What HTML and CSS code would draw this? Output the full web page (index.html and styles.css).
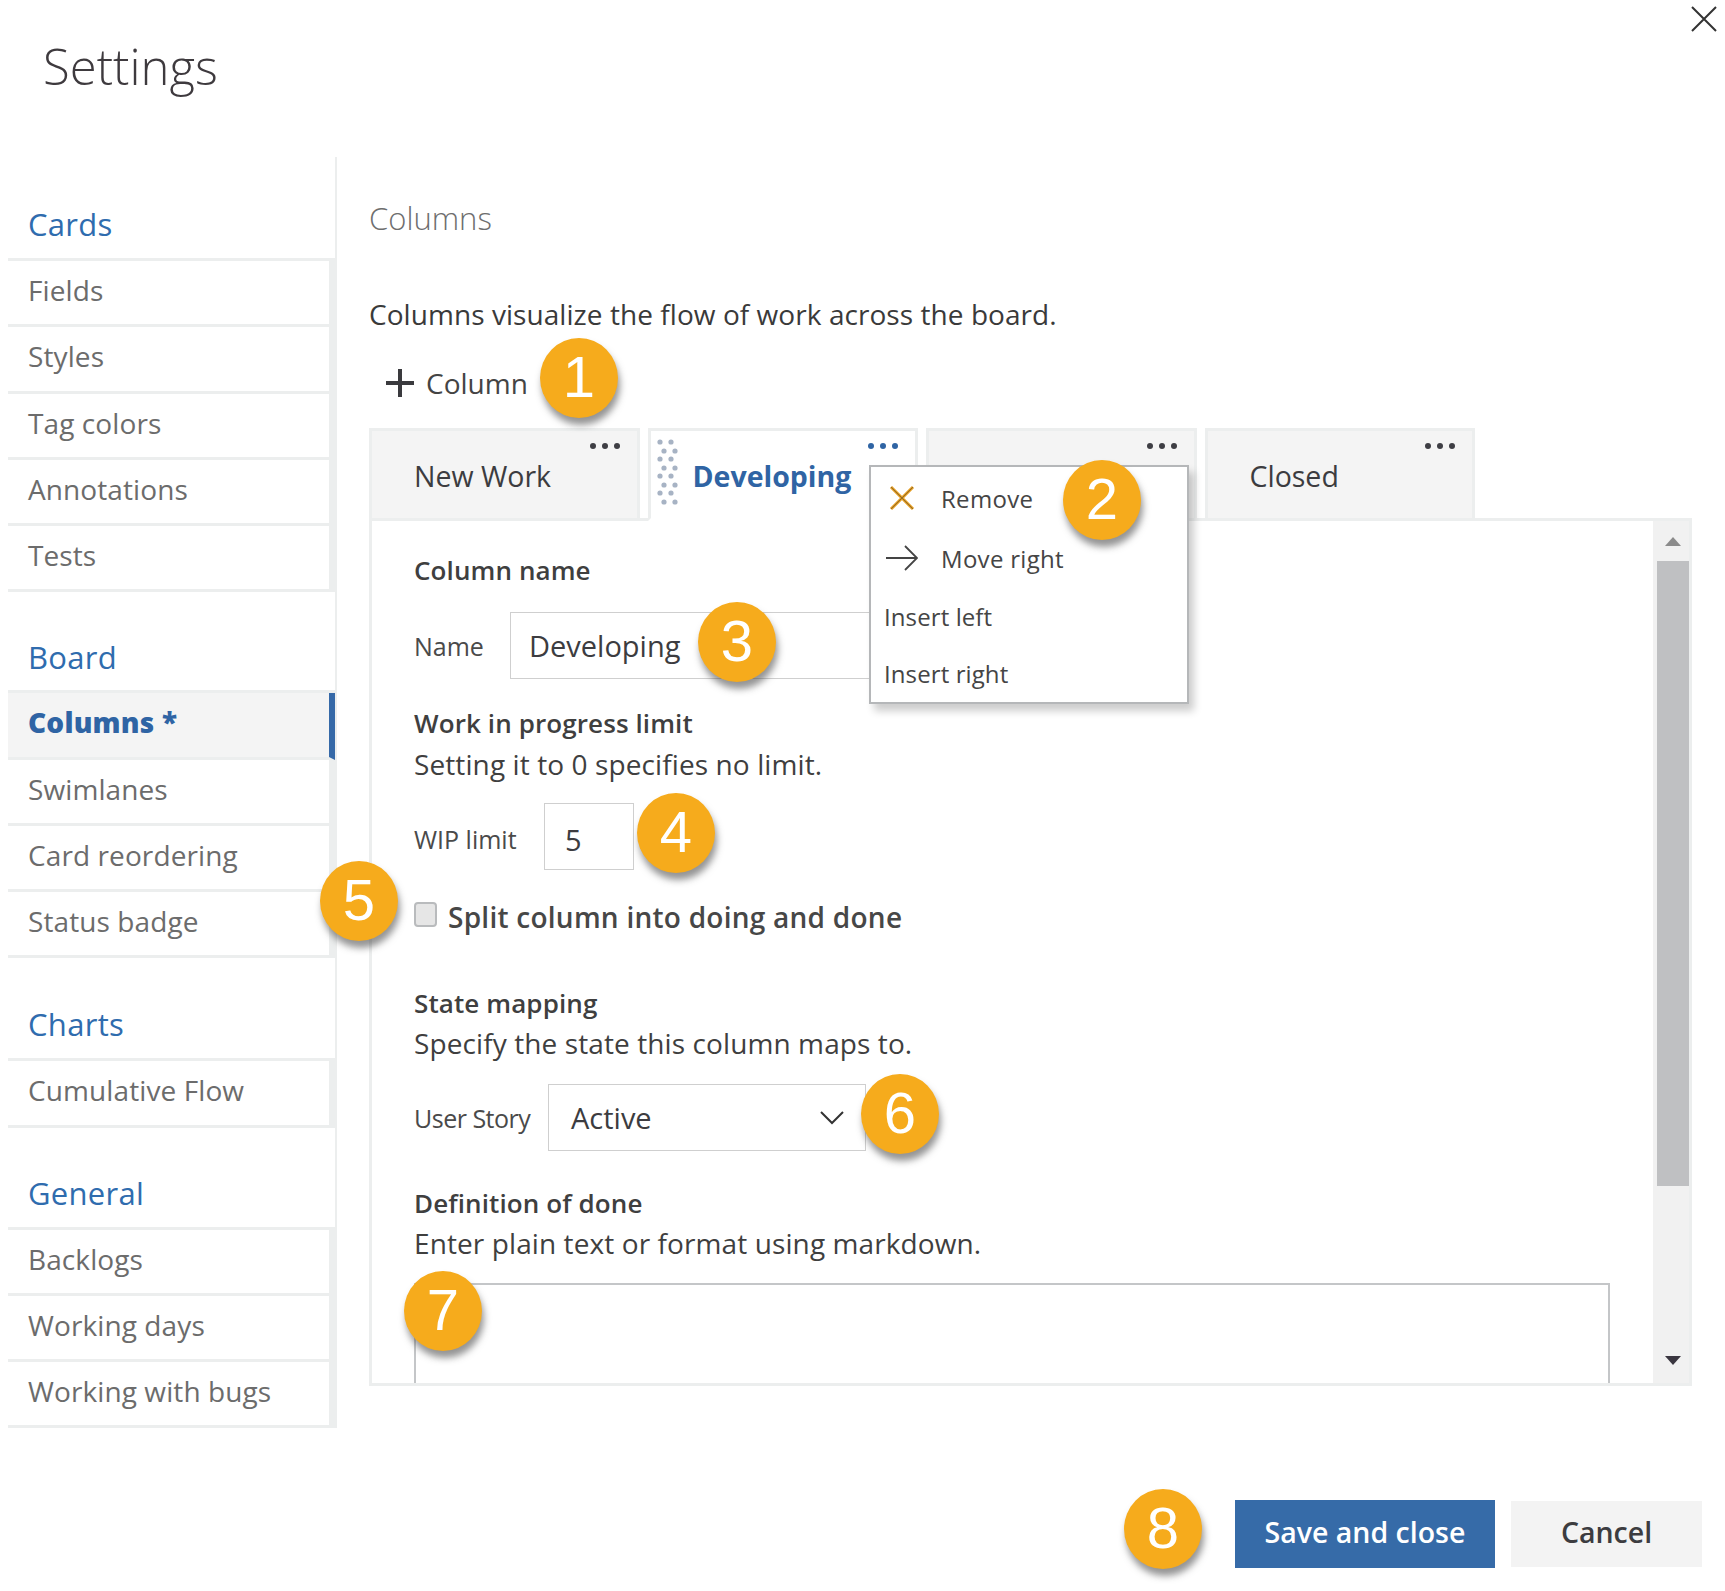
FILE: index.html
```html
<!DOCTYPE html>
<html lang="en">
<head>
    <meta charset="UTF-8">
    <title>Settings</title>
    <link rel="stylesheet" href="styles.css">
</head>
<body>
    <div class="dialog">
        <button class="close-btn" aria-label="Close">
            <svg width="26" height="26" viewBox="0 0 26 26"><path d="M1 1 L25 25 M25 1 L1 25" stroke="#333" stroke-width="2" fill="none"/></svg>
        </button>

        <header class="dialog-title">Settings</header>

        <div class="dialog-body">
            <nav class="sidebar">
                <div class="nav-group">
                    <div class="nav-title">Cards</div>
                    <ul class="nav-list">
                        <li>Fields</li>
                        <li>Styles</li>
                        <li>Tag colors</li>
                        <li>Annotations</li>
                        <li>Tests</li>
                    </ul>
                </div>
                <div class="nav-group">
                    <div class="nav-title">Board</div>
                    <ul class="nav-list">
                        <li class="active">Columns *</li>
                        <li>Swimlanes</li>
                        <li>Card reordering</li>
                        <li>Status badge</li>
                    </ul>
                </div>
                <div class="nav-group">
                    <div class="nav-title">Charts</div>
                    <ul class="nav-list">
                        <li>Cumulative Flow</li>
                    </ul>
                </div>
                <div class="nav-group">
                    <div class="nav-title">General</div>
                    <ul class="nav-list">
                        <li>Backlogs</li>
                        <li>Working days</li>
                        <li>Working with bugs</li>
                    </ul>
                </div>
            </nav>

            <main class="content">
                <h2 class="page-title">Columns</h2>
                <p class="intro">Columns visualize the flow of work across the board.</p>
                <div class="add-column">
                    <svg width="30" height="30" viewBox="0 0 30 30"><path d="M15 1 V29 M1 15 H29" stroke="#3a3a3e" stroke-width="4" fill="none"/></svg>
                    <span>Column</span>
                </div>

                <div class="tabs">
                    <div class="tab">
                        <span class="tab-name">New Work</span>
                        <svg class="tab-more" width="30" height="6" viewBox="0 0 30 6"><circle cx="3" cy="3" r="3"/><circle cx="15" cy="3" r="3"/><circle cx="27" cy="3" r="3"/></svg>
                    </div>
                    <div class="tab tab-active">
                        <svg class="grip" width="21" height="68" viewBox="0 0 21 68">
                            <g fill="#a7b3c4">
                                <circle cx="3" cy="3" r="2.6"/><circle cx="14" cy="3" r="2.6"/>
                                <circle cx="7" cy="12" r="2.6"/><circle cx="18" cy="12" r="2.6"/>
                                <circle cx="3" cy="20" r="2.6"/><circle cx="14" cy="20" r="2.6"/>
                                <circle cx="7" cy="29" r="2.6"/><circle cx="18" cy="29" r="2.6"/>
                                <circle cx="3" cy="37" r="2.6"/><circle cx="14" cy="37" r="2.6"/>
                                <circle cx="7" cy="46" r="2.6"/><circle cx="18" cy="46" r="2.6"/>
                                <circle cx="3" cy="54" r="2.6"/><circle cx="14" cy="54" r="2.6"/>
                                <circle cx="7" cy="63" r="2.6"/><circle cx="18" cy="63" r="2.6"/>
                            </g>
                        </svg>
                        <span class="tab-name">Developing</span>
                        <svg class="tab-more" width="30" height="6" viewBox="0 0 30 6"><circle cx="3" cy="3" r="3"/><circle cx="15" cy="3" r="3"/><circle cx="27" cy="3" r="3"/></svg>
                    </div>
                    <div class="tab">
                        <span class="tab-name"></span>
                        <svg class="tab-more" width="30" height="6" viewBox="0 0 30 6"><circle cx="3" cy="3" r="3"/><circle cx="15" cy="3" r="3"/><circle cx="27" cy="3" r="3"/></svg>
                    </div>
                    <div class="tab">
                        <span class="tab-name">Closed</span>
                        <svg class="tab-more" width="30" height="6" viewBox="0 0 30 6"><circle cx="3" cy="3" r="3"/><circle cx="15" cy="3" r="3"/><circle cx="27" cy="3" r="3"/></svg>
                    </div>
                </div>

                <section class="panel">
                    <div class="panel-form">
                        <div class="field-heading first">Column name</div>
                        <div class="field-row name-row">
                            <label class="field-label label-name">Name</label>
                            <div class="input input-name">Developing</div>
                        </div>

                        <div class="field-heading wip-heading">Work in progress limit</div>
                        <div class="field-help">Setting it to 0 specifies no limit.</div>
                        <div class="field-row wip-row">
                            <label class="field-label label-wip">WIP limit</label>
                            <div class="input input-wip">5</div>
                        </div>

                        <div class="check-row">
                            <span class="checkbox"></span>
                            <span class="check-text">Split column into doing and done</span>
                        </div>

                        <div class="field-heading state-heading">State mapping</div>
                        <div class="field-help tight">Specify the state this column maps to.</div>
                        <div class="field-row state-row">
                            <label class="field-label label-story">User Story</label>
                            <div class="input input-select">
                                <span>Active</span>
                                <svg width="24" height="14" viewBox="0 0 24 14"><path d="M1 1 L12 12 L23 1" stroke="#333" stroke-width="2" fill="none"/></svg>
                            </div>
                        </div>

                        <div class="field-heading done-heading">Definition of done</div>
                        <div class="field-help tight">Enter plain text or format using markdown.</div>
                        <div class="textarea"></div>
                    </div>

                    <div class="scrollbar">
                        <div class="scroll-btn scroll-up"></div>
                        <div class="scroll-thumb"></div>
                        <div class="scroll-fill"></div>
                        <div class="scroll-btn scroll-down"></div>
                    </div>
                </section>
            </main>
        </div>

        <footer class="dialog-footer">
            <button class="btn btn-primary">Save and close</button>
            <button class="btn">Cancel</button>
        </footer>

        <div class="context-menu">
            <div class="menu-item menu-icon-item">
                <svg width="26" height="26" viewBox="0 0 26 26"><path d="M2 2 L24 24 M24 2 L2 24" stroke="#e39a1d" stroke-width="3" fill="none"/><path d="M2 2 L24 24 M24 2 L2 24" stroke="#6b5a35" stroke-width="0.7" fill="none"/></svg>
                <span>Remove</span>
            </div>
            <div class="menu-item menu-icon-item">
                <svg width="32" height="26" viewBox="0 0 32 26"><path d="M0 13 H30 M19 1 L31 13 L19 25" stroke="#444" stroke-width="1.8" fill="none"/></svg>
                <span>Move right</span>
            </div>
            <div class="menu-item">Insert left</div>
            <div class="menu-item">Insert right</div>
        </div>

        <span class="badge badge-1">1</span>
        <span class="badge badge-2">2</span>
        <span class="badge badge-3">3</span>
        <span class="badge badge-4">4</span>
        <span class="badge badge-5">5</span>
        <span class="badge badge-6">6</span>
        <span class="badge badge-7">7</span>
        <span class="badge badge-8">8</span>
    </div>
</body>
</html>
```

FILE: styles.css
```css
* {
    box-sizing: border-box;
}
body {
    margin: 0;
    background-color: #ffffff;
    font-family: "Open Sans", "Noto Sans", sans-serif;
    color: #3c3c3c;
}
.dialog {
    position: relative;
    width: 1725px;
    height: 1591px;
    display: flex;
    flex-direction: column;
    overflow: hidden;
}
.close-btn {
    position: absolute;
    top: 6px;
    right: 8px;
    padding: 0;
    border: none;
    background: none;
}
.dialog-title {
    height: 157px;
    padding: 33px 0 0 43px;
    font-size: 49px;
    line-height: 66px;
    font-weight: 300;
    color: #3e3a3e;
}
.dialog-body {
    display: flex;
    height: 1271px;
}

/* left nav */
.sidebar {
    width: 337px;
    padding-left: 8px;
    border-right: 2px solid #eceeee;
}
.nav-title {
    height: 99px;
    padding: 30px 0 0 20px;
    font-size: 31px;
    line-height: 70px;
    letter-spacing: 0.3px;
    color: #2f6cae;
}
.nav-group:nth-child(1) .nav-title {
    height: 101px;
    padding-top: 32px;
}
.nav-group:nth-child(2) .nav-title {
    height: 98px;
}
.nav-group:nth-child(3) .nav-title {
    height: 100px;
    padding-top: 31px;
}
.nav-list {
    list-style: none;
    margin: 0;
    padding: 0;
    border-top: 3px solid #eceeee;
    border-right: 6px solid #eceeee;
}
.nav-list li {
    height: 66.25px;
    padding-left: 20px;
    border-bottom: 3px solid #eceeee;
    font-size: 28px;
    line-height: 58px;
    letter-spacing: 0.1px;
    color: #6c6c6c;
}
.nav-list li.active {
    margin-right: -6px;
    background-color: #f4f4f4;
    border-right: 6px solid #3669a8;
    font-weight: 800;
    letter-spacing: 0.2px;
    color: #2f64a4;
}

/* main column */
.content {
    flex: 1;
    padding-left: 32px;
}
.page-title {
    margin: 31px 0 0;
    font-size: 31px;
    line-height: 60px;
    font-weight: 300;
    color: #6e6e6e;
}
.intro {
    margin: 46px 0 0;
    font-size: 28px;
    line-height: 40px;
    letter-spacing: 0.06px;
    color: #3a3a3a;
}
.add-column {
    display: flex;
    align-items: center;
    gap: 11px;
    height: 48px;
    margin-top: 25px;
    padding-left: 16px;
    font-size: 28px;
    color: #444;
}
.tabs {
    display: flex;
    gap: 8px;
    margin-top: 21px;
}
.tab {
    display: flex;
    justify-content: space-between;
    width: 270.5px;
    height: 93px;
    margin-bottom: -3px;
    padding: 12px 17px 0 42px;
    background-color: #f4f4f4;
    border: 3px solid #eceeee;
    border-bottom: 3px solid #eceeee;
}
.tab-name {
    align-self: center;
    margin-top: -10px;
    font-size: 28.5px;
    color: #3c3c40;
}
.tab-more {
    flex: none;
    fill: #3e3e44;
}
.tab-active {
    padding-left: 6px;
    background-color: #ffffff;
    border-bottom-color: #ffffff;
}
.tab-active .grip {
    flex: none;
    margin: -4px 15px 0 0;
}
.tab-active .tab-name {
    flex: 1;
    font-weight: 700;
    color: #2f64a4;
}
.tab-active .tab-more {
    fill: #2f64a4;
}

/* form panel */
.panel {
    display: flex;
    width: 1323px;
    height: 868px;
    border: 3px solid #eceeee;
}
.panel-form {
    flex: 1;
    padding-left: 42px;
    overflow: hidden;
}
.field-heading {
    font-size: 26px;
    line-height: 41px;
    font-weight: 600;
    letter-spacing: 0.1px;
    color: #3f3f3f;
}
.field-heading.first {
    margin-top: 29px;
}
.field-help {
    font-size: 28px;
    line-height: 41px;
    letter-spacing: 0.1px;
    color: #3f3f3f;
}
.field-help.tight {
    margin-top: -1px;
}
.field-row {
    display: flex;
    align-items: center;
}
.field-label {
    flex: none;
    font-size: 25px;
    color: #4a4a4a;
}
.label-name {
    width: 96px;
}
.label-wip {
    width: 130px;
    padding-top: 5px;
}
.label-story {
    width: 134px;
    letter-spacing: -0.5px;
}
.input {
    height: 67px;
    border: 1px solid #cfcfcf;
    font-size: 29px;
    line-height: 65px;
    color: #3c3c40;
}
.name-row {
    margin-top: 21px;
}
.input-name {
    width: 590px;
    padding-left: 18px;
}
.wip-heading {
    margin-top: 24px;
}
.wip-row {
    margin-top: 18px;
}
.input-wip {
    width: 90px;
    padding-left: 20px;
    line-height: 71px;
}
.check-row {
    display: flex;
    align-items: center;
    gap: 11px;
    height: 40px;
    margin-top: 27px;
}
.checkbox {
    width: 23px;
    height: 25px;
    margin-top: -6px;
    background-color: #e6e6e6;
    border: 2px solid #b9bbbd;
    border-radius: 4px;
}
.check-text {
    font-size: 28px;
    font-weight: 600;
    letter-spacing: 0.25px;
    color: #474747;
}
.state-heading {
    margin-top: 46px;
}
.state-row {
    margin-top: 20px;
}
.input-select {
    display: flex;
    align-items: center;
    justify-content: space-between;
    width: 318px;
    padding: 0 21px 0 22px;
}
.done-heading {
    margin-top: 32px;
}
.textarea {
    width: 1196px;
    height: 100px;
    margin-top: 19px;
    border: 2px solid #c4c6c8;
    border-bottom: none;
}

/* scrollbar */
.scrollbar {
    display: flex;
    flex-direction: column;
    flex: none;
    width: 36px;
    background-color: #f1f1f1;
}
.scroll-btn {
    display: flex;
    align-items: center;
    justify-content: center;
    flex: none;
    padding-left: 4px;
}
.scroll-up {
    height: 40px;
}
.scroll-up::before {
    content: "";
    border: 8px solid transparent;
    border-top: none;
    border-bottom: 9px solid #8b8b8b;
}
.scroll-thumb {
    height: 625px;
    margin-left: 4px;
    background-color: #bfc0c2;
}
.scroll-fill {
    flex: 1;
}
.scroll-down {
    height: 46px;
}
.scroll-down::before {
    content: "";
    border: 8px solid transparent;
    border-bottom: none;
    border-top: 9px solid #3a3640;
}

/* footer */
.dialog-footer {
    display: flex;
    align-items: center;
    justify-content: flex-end;
    gap: 16px;
    margin-top: 72px;
    padding-right: 23px;
}
.btn {
    width: 191px;
    height: 66px;
    padding: 0 0 4px;
    border: none;
    background-color: #f3f3f3;
    font-family: inherit;
    font-size: 28.5px;
    font-weight: 600;
    color: #3c3c40;
}
.btn-primary {
    width: 260px;
    height: 68px;
    background-color: #366ba8;
    color: #ffffff;
}

/* popup menu */
.context-menu {
    position: absolute;
    top: 465px;
    left: 869px;
    width: 320px;
    height: 239px;
    padding-top: 1px;
    background-color: #ffffff;
    border: 2px solid #b5b7b9;
    box-shadow: 5px 7px 8px rgba(0, 0, 0, 0.2);
}
.menu-item {
    display: flex;
    align-items: center;
    height: 57px;
    padding-left: 13px;
    font-size: 24px;
    letter-spacing: 0.1px;
    color: #454545;
}
.menu-icon-item {
    height: 60px;
    gap: 23px;
    padding-left: 15px;
    letter-spacing: 0.3px;
}
.menu-icon-item svg {
    flex: none;
    width: 32px;
}

/* numbered callouts */
.badge {
    position: absolute;
    width: 78px;
    height: 80px;
    border-radius: 50%;
    background-color: #f6ab1c;
    box-shadow: 2px 7px 7px rgba(60, 60, 60, 0.55);
    font-family: "Liberation Sans", sans-serif;
    font-size: 58px;
    line-height: 78px;
    text-align: center;
    color: #ffffff;
}
.badge-1 { left: 540px; top: 338px; }
.badge-2 { left: 1063px; top: 460px; }
.badge-3 { left: 698px; top: 602px; }
.badge-4 { left: 637px; top: 793px; }
.badge-5 { left: 320px; top: 861px; }
.badge-6 { left: 861px; top: 1074px; }
.badge-7 { left: 404px; top: 1271px; }
.badge-8 { left: 1124px; top: 1489px; }
```
